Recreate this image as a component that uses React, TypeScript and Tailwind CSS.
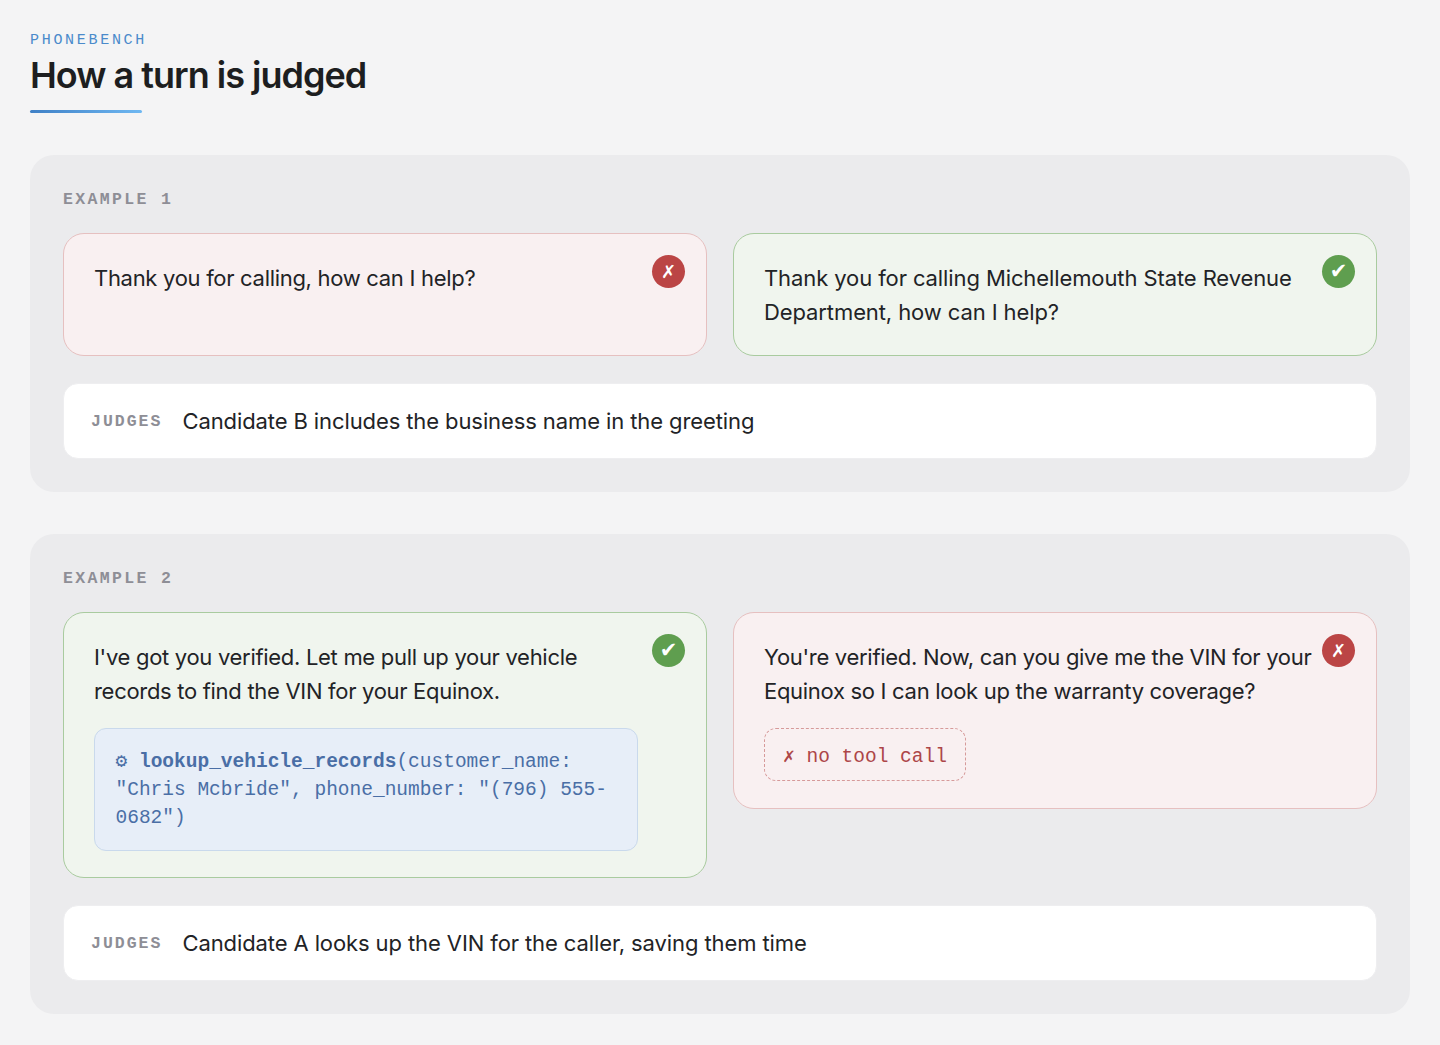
const sans = "font-['Inter','Liberation_Sans',sans-serif]";

const Badge = ({ ok }: { ok: boolean }) => (
  <div
    className={`absolute top-[21px] right-[21px] flex h-[33px] w-[33px] items-center justify-center rounded-full leading-none font-bold text-white font-['DejaVu_Sans',sans-serif] ${
      ok ? 'bg-[#5f9e4f] text-[21px]' : 'bg-[#bb4545] text-[18px]'
    }`}
  >
    {ok ? '✔' : '✗'}
  </div>
);

const Candidate = ({ ok, children }: { ok: boolean; children: React.ReactNode }) => (
  <div
    className={`relative rounded-[21px] border px-[30px] pt-[27px] pb-[26px] ${
      ok ? 'border-[#a9cb9f] bg-[#f0f5ee]' : 'border-[#e6c0c0] bg-[#f9f0f1]'
    }`}
  >
    {children}
    <Badge ok={ok} />
  </div>
);

const Speech = ({ tight, children }: { tight?: boolean; children: React.ReactNode }) => (
  <p className={`pr-[20px] text-[22px] leading-[34px] text-[#222326] ${tight ? 'tracking-[-0.3px]' : 'tracking-[-0.1px]'}`}>
    {children}
  </p>
);

const Judges = ({ children }: { children: React.ReactNode }) => (
  <div className="mt-[27px] flex h-[76px] items-center gap-[20px] rounded-[15px] border border-[#eeeef0] bg-white px-[27px]">
    <span className="pt-[2px] font-['Liberation_Mono',monospace] text-[16.5px] font-bold tracking-[2px] text-[#8e8e96]">JUDGES</span>
    <span className="text-[22px] tracking-[-0.1px] text-[#222326]">{children}</span>
  </div>
);

const Example = ({ title, children }: { title: string; children: React.ReactNode }) => (
  <section className="rounded-[24px] bg-[#ebebed] px-[33px] pt-[34px] pb-[33px]">
    <h2 className="mb-[22px] font-['Liberation_Mono',monospace] text-[16.5px] leading-[22px] font-bold tracking-[2.35px] text-[#8e8e96]">
      {title}
    </h2>
    {children}
  </section>
);

export default function App() {
  return (
    <div className={`min-h-[1045px] bg-[#f4f4f5] px-[30px] pt-[31px] pb-[31px] ${sans}`}>
      <header className="mb-[42px]">
        <div className="font-['Liberation_Mono',monospace] text-[15px] leading-[20px] tracking-[2.7px] text-[#4a8acb]">
          PHONEBENCH
        </div>
        <h1 className="mt-[3px] text-[36px] leading-[42px] font-semibold tracking-[-1px] text-[#1d1e20]">
          How a turn is judged
        </h1>
        <div className="mt-[14px] h-[3px] w-[112px] rounded-full bg-gradient-to-r from-[#3f80c6] to-[#6fb8f2]" />
      </header>

      <div className="flex flex-col gap-[42px]">
        <Example title="EXAMPLE 1">
          <div className="grid grid-cols-2 items-start gap-[26px]">
            <Candidate ok={false}>
              <Speech tight>
                Thank you for calling, how can I help?
                <br />
                &nbsp;
              </Speech>
            </Candidate>
            <Candidate ok>
              <Speech>Thank you for calling Michellemouth State Revenue Department, how can I help?</Speech>
            </Candidate>
          </div>
          <Judges>Candidate B includes the business name in the greeting</Judges>
        </Example>

        <Example title="EXAMPLE 2">
          <div className="grid grid-cols-2 items-start gap-[26px]">
            <Candidate ok>
              <Speech tight>I've got you verified. Let me pull up your vehicle records to find the VIN for your Equinox.</Speech>
              <div className="mt-[20px] mr-[38px] rounded-[12px] border border-[#c9d9ec] bg-[#e7eef8] px-[20.5px] pt-[19px] pb-[18px] font-['Liberation_Mono',monospace] text-[19.5px] leading-[28px] text-[#4a6ea6]">
                <span className="font-bold">⚙ lookup_vehicle_records</span>(customer_name: "Chris Mcbride", phone_number: "(796) 555-0682")
              </div>
            </Candidate>
            <Candidate ok={false}>
              <Speech tight>You're verified. Now, can you give me the VIN for your Equinox so I can look up the warranty coverage?</Speech>
              <div className="mt-[20px] mb-[1px] inline-block rounded-[12px] border-[1.5px] border-dashed border-[#d69a9a] px-[18px] pt-[14px] pb-[9px] font-['Liberation_Mono',monospace] text-[19.5px] leading-[28px] text-[#ad4648]">
                <span className="font-bold">✗</span> no tool call
              </div>
            </Candidate>
          </div>
          <Judges>Candidate A looks up the VIN for the caller, saving them time</Judges>
        </Example>
      </div>
    </div>
  );
}
